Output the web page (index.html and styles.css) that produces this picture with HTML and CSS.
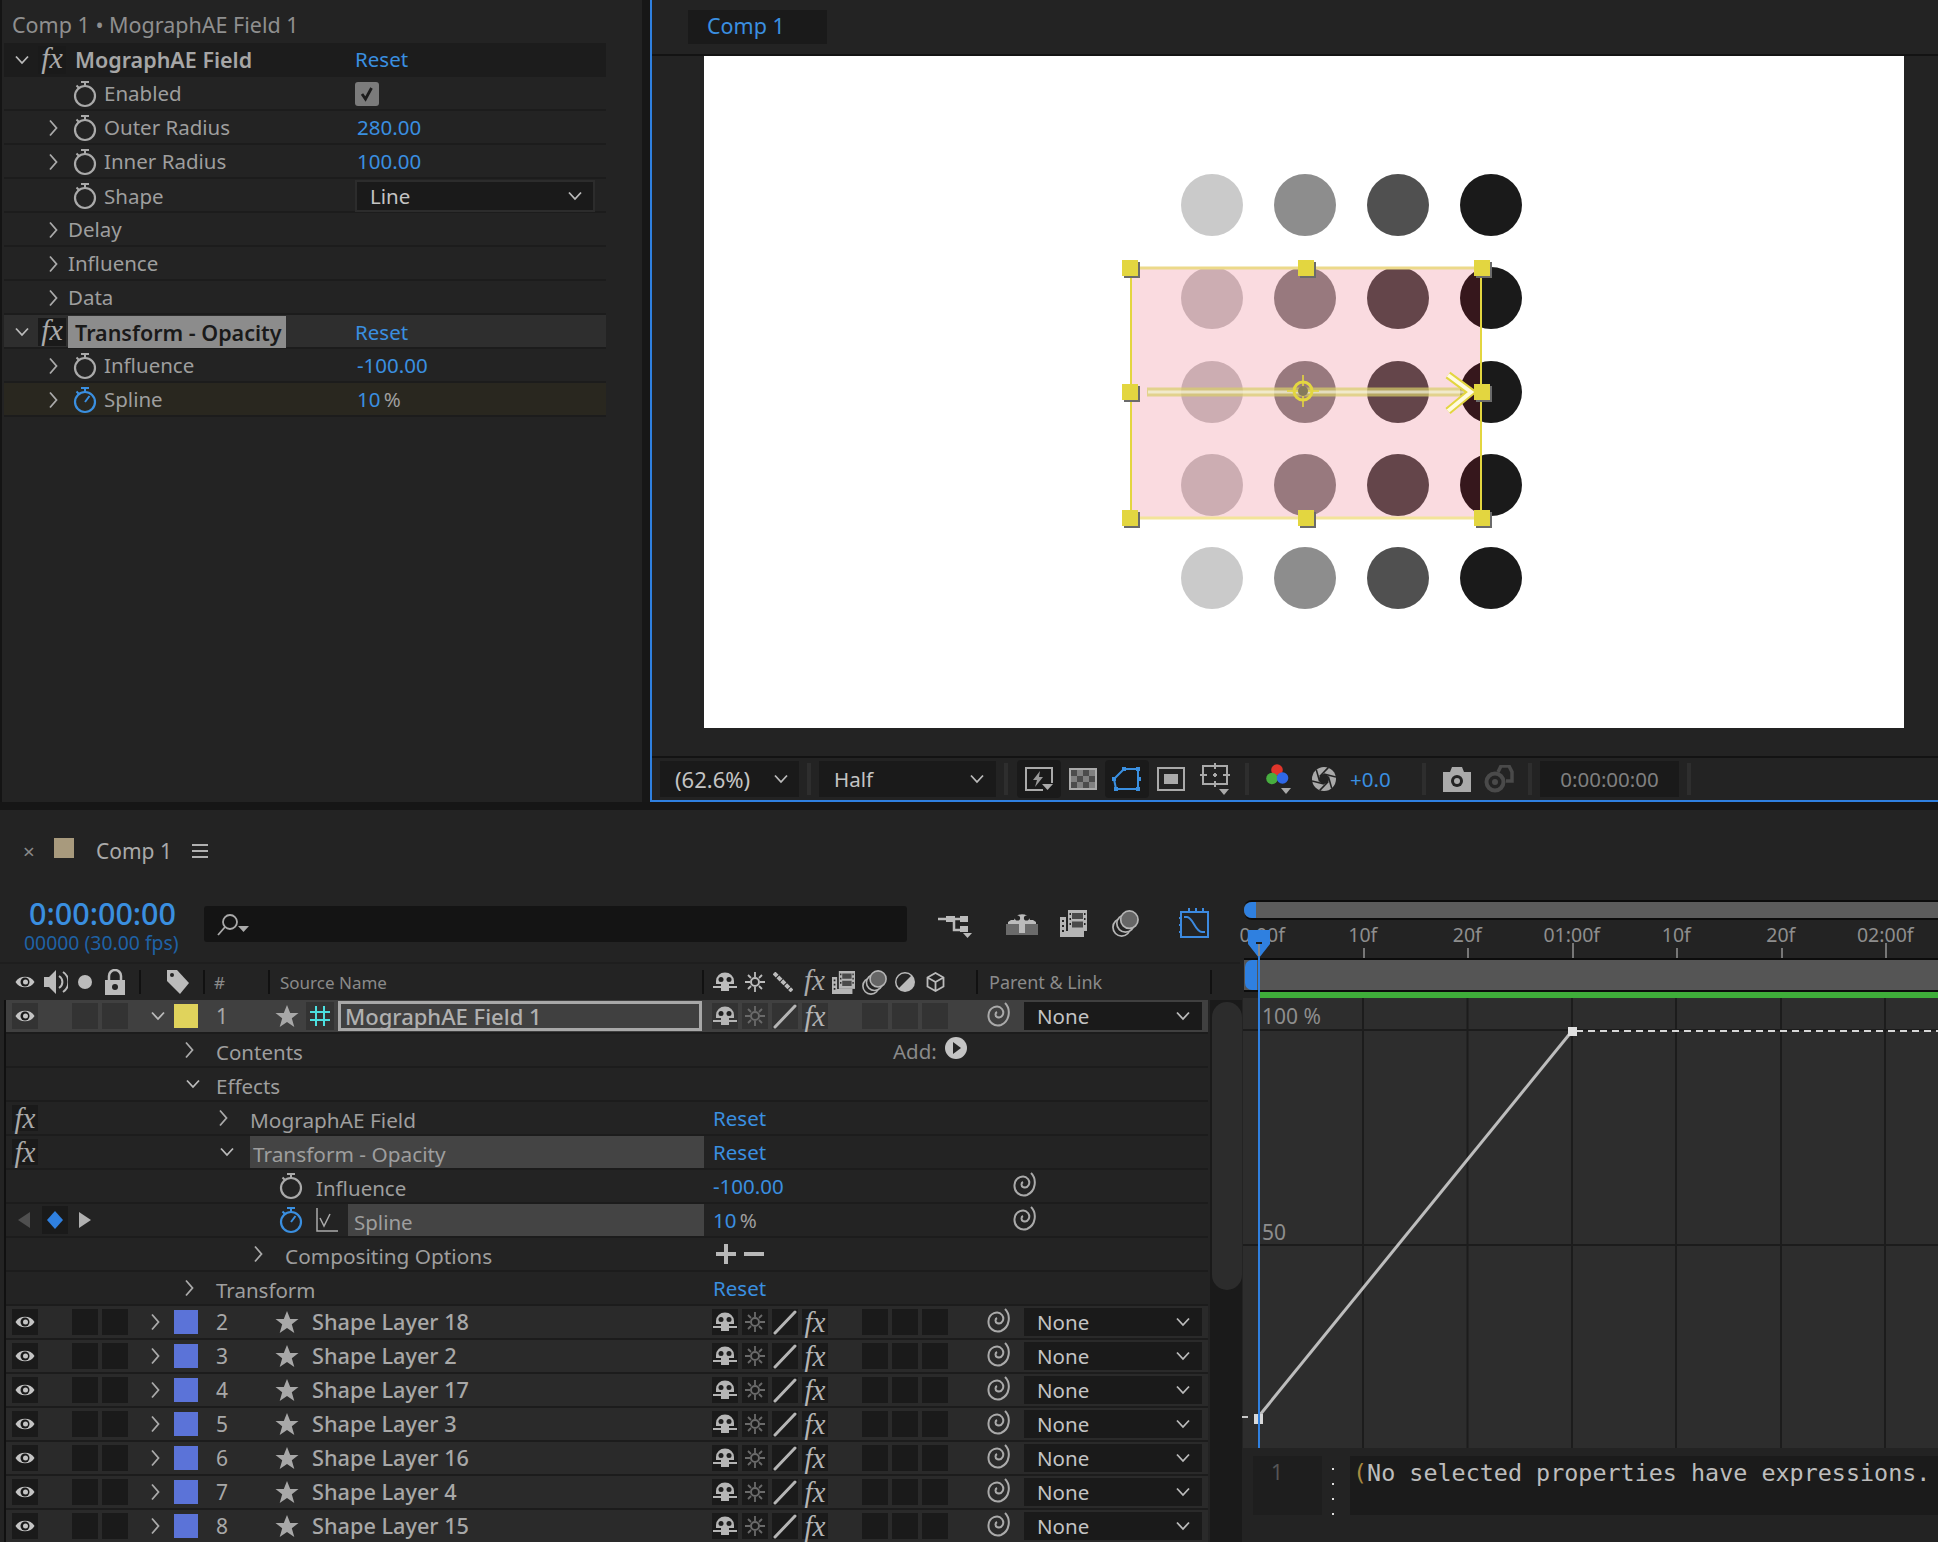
FILE: index.html
```html
<!DOCTYPE html>
<html lang="en">
<head>
  <meta charset="UTF-8" />
  <title>Comp 1</title>
  <link rel="stylesheet" href="styles.css">
</head>
<body>
  <!-- shared icons -->
  <svg class="defs" width="0" height="0">
    <symbol id="chev-r" viewBox="0 0 10 18"><path d="M2 1.500l6.500 7.500-6.500 7.500" fill="none" stroke="currentColor" stroke-width="1.800"/></symbol>
    <symbol id="chev-d" viewBox="0 0 14 10"><path d="M1 1.500l6 6.500 6-6.500" fill="none" stroke="currentColor" stroke-width="1.800"/></symbol>
    <symbol id="watch" viewBox="0 0 24 28"><circle cx="12" cy="16" r="10" fill="none" stroke="currentColor" stroke-width="2.200"/><path d="M8 2h8M12 2v4M3.500 5.500l3 3" fill="none" stroke="currentColor" stroke-width="2"/></symbol>
    <symbol id="watch-on" viewBox="0 0 24 28"><circle cx="12" cy="16" r="10" fill="none" stroke="currentColor" stroke-width="2.200"/><path d="M8 2h8M12 2v4M3.500 5.500l3 3M12 16l4.500-6" fill="none" stroke="currentColor" stroke-width="2"/></symbol>
    <symbol id="eye" viewBox="0 0 20 16"><path d="M0.500 8C4 1 16 1 19.500 8 16 15 4 15 0.500 8z" fill="#c4c4c4"/><circle cx="10" cy="8" r="4.500" fill="#1a1a1a"/><circle cx="10.500" cy="8" r="2.500" fill="#c4c4c4"/></symbol>
    <symbol id="star" viewBox="0 0 24 24"><path d="M12 1l3.200 8h8.300l-6.700 5.300 2.500 8.700-7.300-5-7.300 5 2.500-8.700L0.500 9h8.300z" fill="currentColor"/></symbol>
    <symbol id="shy" viewBox="0 0 24 20"><path d="M3 9a9 8.500 0 0 1 18 0v3h-5v7H8v-7H3z" fill="currentColor"/><circle cx="8" cy="7.500" r="2.500" fill="#1e1e1e"/><circle cx="16" cy="7.500" r="2.500" fill="#1e1e1e"/><path d="M0 15h8M16 15h8" stroke="currentColor" stroke-width="2"/></symbol>
    <symbol id="sun" viewBox="0 0 20 20"><circle cx="10" cy="10" r="4" fill="none" stroke="currentColor" stroke-width="2"/><path d="M10 0v5M10 15v5M0 10h5M15 10h5M3 3l3 3M14 14l3 3M3 17l3-3M14 6l3-3" stroke="currentColor" stroke-width="1.800"/></symbol>
    <symbol id="diag" viewBox="0 0 26 26"><path d="M3 24L23 3" stroke="currentColor" stroke-width="3" stroke-linecap="round"/></symbol>
    <symbol id="diag-dots" viewBox="0 0 20 20"><path d="M1 1L19 19" stroke="currentColor" stroke-width="4" stroke-dasharray="4.500 1"/></symbol>
    <symbol id="spiral" viewBox="0 0 24 26"><path d="M18 2C24 8 23 20 14 24 7 26 1 21 1.500 14 2 6 11 3 15 8 18 12 15 18 10 16 8 15 8 12 10 11" fill="none" stroke="currentColor" stroke-width="2"/></symbol>
    <symbol id="film" viewBox="0 0 27 27"><path d="M0 7h6v14h18v6H0z" fill="currentColor"/><path d="M2 10h2v2H2zM2 15h2v2H2zM2 20h2v2H2z" fill="#232323"/><path d="M8 0h19v21H8z" fill="currentColor"/><path d="M12 3h11v6H12zM12 11.500h11v6H12z" fill="#4a4a4a"/><path d="M9.500 3h1.500v2H9.500zM9.500 8h1.500v2H9.500zM9.500 13h1.500v2H9.500zM24 3h1.500v2H24zM24 8h1.500v2H24zM24 13h1.500v2H24z" fill="#232323"/></symbol>
    <symbol id="blur" viewBox="0 0 28 28"><circle cx="10" cy="18" r="9" fill="#232323" stroke="currentColor" stroke-width="1.800"/><circle cx="14" cy="14" r="9" fill="#232323" stroke="currentColor" stroke-width="1.800"/><circle cx="18" cy="10" r="9" fill="#666" stroke="currentColor" stroke-width="1.800"/></symbol>
  </svg>

  <div class="top">
    <section class="effects">
      <div class="fx-title">Comp 1 • MographAE Field 1</div>
      <div class="fx-row fx-head"><svg class="chev-d ic-mid"><use href="#chev-d"/></svg><span class="fx-badge">fx</span><span class="fx-name strong">MographAE Field</span><span class="blue">Reset</span></div>
      <div class="fx-row"><span></span><span></span><span class="fx-name"><svg class="watch"><use href="#watch"/></svg>Enabled</span><span class="checkbox"><svg width="16" height="16" viewBox="0 0 16 16"><path d="M3 8l3.500 5 6-11" fill="none" stroke="#1c1c1c" stroke-width="2.800"/></svg></span></div>
      <div class="fx-row"><span></span><svg class="chev-r"><use href="#chev-r"/></svg><span class="fx-name"><svg class="watch"><use href="#watch"/></svg>Outer Radius</span><span class="blue num">280.00</span></div>
      <div class="fx-row"><span></span><svg class="chev-r"><use href="#chev-r"/></svg><span class="fx-name"><svg class="watch"><use href="#watch"/></svg>Inner Radius</span><span class="blue num">100.00</span></div>
      <div class="fx-row"><span></span><span></span><span class="fx-name"><svg class="watch"><use href="#watch"/></svg>Shape</span><span class="select select-fx">Line<svg class="chev-d"><use href="#chev-d"/></svg></span></div>
      <div class="fx-row"><span></span><svg class="chev-r"><use href="#chev-r"/></svg><span class="fx-name plain">Delay</span></div>
      <div class="fx-row"><span></span><svg class="chev-r"><use href="#chev-r"/></svg><span class="fx-name plain">Influence</span></div>
      <div class="fx-row"><span></span><svg class="chev-r"><use href="#chev-r"/></svg><span class="fx-name plain">Data</span></div>
      <div class="fx-row fx-head-sel"><svg class="chev-d ic-mid"><use href="#chev-d"/></svg><span class="fx-badge">fx</span><span class="fx-name"><span class="fx-sel">Transform - Opacity</span></span><span class="blue">Reset</span></div>
      <div class="fx-row"><span></span><svg class="chev-r"><use href="#chev-r"/></svg><span class="fx-name"><svg class="watch"><use href="#watch"/></svg>Influence</span><span class="blue num">-100.00</span></div>
      <div class="fx-row fx-key"><span></span><svg class="chev-r"><use href="#chev-r"/></svg><span class="fx-name"><svg class="watch blue"><use href="#watch-on"/></svg>Spline</span><span class="blue num">10 <i class="pct">%</i></span></div>
    </section>

    <section class="viewer">
      <div class="view-tabs"><span class="view-tab">Comp 1</span></div>
      <div class="stage">
        <svg class="comp" width="1200" height="672" viewBox="704 56 1200 672">
          <rect x="704" y="56" width="1200" height="672" fill="#fff"/>
          <g fill="#cacaca"><circle cx="1212" cy="205" r="31"/><circle cx="1212" cy="298" r="31"/><circle cx="1212" cy="392" r="31"/><circle cx="1212" cy="485" r="31"/><circle cx="1212" cy="578" r="31"/></g>
          <g fill="#8d8d8d"><circle cx="1305" cy="205" r="31"/><circle cx="1305" cy="298" r="31"/><circle cx="1305" cy="392" r="31"/><circle cx="1305" cy="485" r="31"/><circle cx="1305" cy="578" r="31"/></g>
          <g fill="#505050"><circle cx="1398" cy="205" r="31"/><circle cx="1398" cy="298" r="31"/><circle cx="1398" cy="392" r="31"/><circle cx="1398" cy="485" r="31"/><circle cx="1398" cy="578" r="31"/></g>
          <g fill="#1a1a1a"><circle cx="1491" cy="205" r="31"/><circle cx="1491" cy="298" r="31"/><circle cx="1491" cy="392" r="31"/><circle cx="1491" cy="485" r="31"/><circle cx="1491" cy="578" r="31"/></g>
          <rect x="1131" y="268" width="350" height="250" fill="rgb(222,5,40)" fill-opacity=".144"/>
          <path d="M1131 268V518M1481 268V518" stroke="#e3d640" stroke-width="2"/>
          <path d="M1131 268H1481" stroke="#ecd98a" stroke-width="3"/>
          <path d="M1131 518H1481" stroke="#f3e49a" stroke-width="3"/>
          <path d="M1147 392H1468" stroke="#d8cf6a" stroke-width="9" opacity=".7"/>
          <path d="M1148 392H1470" stroke="#fff" stroke-width="3" opacity=".55"/>
          <path d="M1448 375L1471 392 1448 411" fill="none" stroke="#e3d640" stroke-width="8"/>
          <path d="M1448 375L1471 392 1448 411" fill="none" stroke="#fffbe0" stroke-width="4"/>
          <circle cx="1303" cy="391" r="9" fill="none" stroke="#e3d640" stroke-width="3"/>
          <path d="M1303 375v32M1287 391h32" stroke="#e3d640" stroke-width="2" opacity=".8"/>
          <circle cx="1303" cy="391" r="5" fill="#857a5c"/>
          <g fill="#6b6b6b"><rect x="1124" y="262" width="16" height="16"/><rect x="1300" y="262" width="16" height="16"/><rect x="1476" y="262" width="16" height="16"/><rect x="1124" y="386" width="16" height="16"/><rect x="1476" y="386" width="16" height="16"/><rect x="1124" y="512" width="16" height="16"/><rect x="1300" y="512" width="16" height="16"/><rect x="1476" y="512" width="16" height="16"/></g>
          <g fill="#e3d640"><rect x="1122" y="260" width="16" height="16"/><rect x="1298" y="260" width="16" height="16"/><rect x="1474" y="260" width="16" height="16"/><rect x="1122" y="384" width="16" height="16"/><rect x="1474" y="384" width="16" height="16"/><rect x="1122" y="510" width="16" height="16"/><rect x="1298" y="510" width="16" height="16"/><rect x="1474" y="510" width="16" height="16"/></g>
        </svg>
      </div>
      <div class="view-bar">
        <span class="select select-zoom">(62.6%)<svg class="chev-d"><use href="#chev-d"/></svg></span>
        <span class="tb-sep"></span>
        <span class="select select-half">Half<svg class="chev-d"><use href="#chev-d"/></svg></span>
        <span class="tb-sep"></span>
        <span class="tb-btn tb-dark first"><svg width="28" height="24" viewBox="0 0 28 24"><path d="M18 23H1V1h26v15" fill="none" stroke="#aaa" stroke-width="2"/><path d="M15 4L8 13h4l-2 7 8-10h-4z" fill="#999"/><path d="M17 17h11l-5.500 6z" fill="#aaa"/></svg></span>
        <span class="tb-btn"><svg width="28" height="22" viewBox="0 0 28 22"><rect width="28" height="22" fill="#aaa"/><rect x="2" y="2" width="24" height="18" fill="#4c4c4c"/><path d="M8 2h6v6H8zM20 2h6v6h-6zM2 8h6v6H2zM14 8h6v6h-6zM8 14h6v6H8zM20 14h6v6h-6z" fill="#808080"/></svg></span>
        <span class="tb-btn tb-dark blue"><svg width="30" height="26" viewBox="0 0 30 26"><path d="M2 13L12 3H26V23H4z" fill="none" stroke="currentColor" stroke-width="2"/><path d="M10 1h4v4h-4zM24 1h4v4h-4zM25 11h4v4h-4zM24 21h4v4h-4zM2 21h4v4H2zM0 11h4v4H0z" fill="currentColor"/></svg></span>
        <span class="tb-btn"><svg width="28" height="24" viewBox="0 0 28 24"><rect x="1" y="1" width="26" height="22" fill="none" stroke="#aaa" stroke-width="2"/><rect x="7" y="7" width="14" height="10" fill="#aaa"/></svg></span>
        <span class="tb-btn"><svg width="30" height="32" viewBox="0 0 30 32"><rect x="3" y="3" width="24" height="18" fill="none" stroke="#aaa" stroke-width="2"/><path d="M15 0v6M15 18v6M0 12h7M23 12h7M13 12h4M15 10v4" stroke="#aaa" stroke-width="2"/><path d="M19 26h10l-5 6z" fill="#aaa"/></svg></span>
        <span class="tb-sep"></span>
        <span class="tb-btn colors"><svg width="26" height="30" viewBox="0 0 26 30"><circle cx="12" cy="6" r="5.800" fill="#e0352b"/><circle cx="7" cy="14.500" r="5.800" fill="#47ad3f"/><circle cx="17.500" cy="14" r="5.800" fill="#2f68e8"/><path d="M16 24h10l-5 6z" fill="#aaa"/></svg></span>
        <span class="tb-btn aperture"><svg width="24" height="24" viewBox="0 0 24 24"><circle cx="12" cy="12" r="12" fill="#aaa"/><g stroke="#232323" stroke-width="1.600"><path d="M12 7L24 10"/><path d="M12 7L24 10" transform="rotate(60 12 12)"/><path d="M12 7L24 10" transform="rotate(120 12 12)"/><path d="M12 7L24 10" transform="rotate(180 12 12)"/><path d="M12 7L24 10" transform="rotate(240 12 12)"/><path d="M12 7L24 10" transform="rotate(300 12 12)"/></g><circle cx="12" cy="12" r="5" fill="#232323"/></svg></span>
        <span class="blue exposure">+0.0</span>
        <span class="tb-sep sep-wide"></span>
        <span class="tb-btn small"><svg width="28" height="26" viewBox="0 0 28 26"><path d="M0 6h7l2-5h10l2 5h7v20H0z" fill="#aaa"/><circle cx="14" cy="15" r="6" fill="#232323"/><circle cx="14" cy="15" r="3" fill="#aaa"/></svg></span>
        <span class="tb-btn small"><svg width="30" height="28" viewBox="0 0 30 28"><circle cx="11" cy="17" r="8.500" fill="none" stroke="#4a4a4a" stroke-width="4"/><circle cx="11" cy="17" r="3" fill="#4a4a4a"/><path d="M14 7l3-6h8l3 6v9h-6" fill="none" stroke="#4a4a4a" stroke-width="3.500"/></svg></span>
        <span class="tb-sep"></span>
        <span class="time-box">0:00:00:00</span>
        <span class="tb-sep"></span>
      </div>
    </section>
  </div>

  <section class="timeline">
    <div class="tl-tab">
      <span class="tl-close">×</span>
      <span class="tl-swatch"></span>
      <span class="tl-name">Comp 1</span>
      <svg class="tl-menu" width="16" height="14" viewBox="0 0 16 14"><path d="M0 1h16M0 7h16M0 13h16" stroke="#b0b0b0" stroke-width="2"/></svg>
    </div>
    <div class="tl-body">
      <div class="tl-left">
        <div class="tl-ctrl">
          <div class="tc">
            <div class="tc-main">0:00:00:00</div>
            <div class="tc-sub">00000 (30.00 fps)</div>
          </div>
          <div class="search"><svg width="34" height="24" viewBox="0 0 34 24"><circle cx="14" cy="9" r="7" fill="none" stroke="#aaa" stroke-width="1.800"/><path d="M9 14l-7 8" stroke="#aaa" stroke-width="1.800"/><path d="M22 13h11l-5.500 6z" fill="#aaa"/></svg></div>
          <div class="ctrl-icons">
            <svg class="ci-flow" width="34" height="24" viewBox="0 0 34 24"><path d="M0 5h30M16 5v11h8" fill="none" stroke="#bbb" stroke-width="2.500"/><path d="M8 2h9v6H8zM22 2h8v6h-8zM22 12h8v6h-8z" fill="#bbb"/><path d="M25 19h9l-4.500 5z" fill="#bbb"/></svg>
            <svg class="ci-shy" width="32" height="24" viewBox="0 0 32 24"><path d="M0 13h32v11H0z" fill="#6a6a6a"/><path d="M2 13v-2l3-2h3a8.500 8.500 0 0 1 16 0h3l3 2v2z" fill="#bbb"/><path d="M13 12h6v10h-6z" fill="#bbb"/><circle cx="11.500" cy="7" r="2.600" fill="#232323"/><circle cx="20.500" cy="7" r="2.600" fill="#232323"/></svg>
            <svg class="ci-film" width="27" height="27"><use href="#film"/></svg>
            <svg class="ci-blur" width="27" height="27"><use href="#blur"/></svg>
            <svg class="ci-graph" width="30" height="30" viewBox="0 0 30 30"><rect x="2" y="4" width="27" height="25" fill="none" stroke="#3c8ae0" stroke-width="2"/><path d="M5 9h3c6 0 8 15 15 15h3" fill="none" stroke="#3c8ae0" stroke-width="2"/><path d="M10 0v4M17 0v4M24 0v4M0 10h2M0 17h2M0 24h2" stroke="#3c8ae0" stroke-width="2"/></svg>
          </div>
        </div>
        <div class="tl-head">
          <svg class="eye" width="20" height="16"><use href="#eye"/></svg>
          <svg class="h-audio" width="24" height="26" viewBox="0 0 24 26"><path d="M0 8h5l7-7v24l-7-7H0z" fill="#bbb"/><path d="M15 7a7 7 0 0 1 0 12M19 3a12 12 0 0 1 0 20" fill="none" stroke="#bbb" stroke-width="2"/></svg>
          <span class="h-solo"></span>
          <svg class="h-lock" width="20" height="26" viewBox="0 0 20 26"><path d="M4 12V7a6 6 0 0 1 12 0v5" fill="none" stroke="#bbb" stroke-width="2.500"/><path d="M0 11h20v15H0z" fill="#bbb"/><circle cx="10" cy="18" r="3" fill="#232323"/></svg>
          <span class="h-sep s1"></span>
          <svg class="h-tag" width="24" height="26" viewBox="0 0 24 26"><path d="M1 1h10l12 13-9 11L1 12z" fill="#bbb"/><circle cx="6" cy="6" r="2" fill="#232323"/></svg>
          <span class="h-sep s2"></span>
          <span class="h-hash">#</span>
          <span class="h-sep s3"></span>
          <span class="h-src">Source Name</span>
          <span class="h-sep"></span>
          <svg class="sw-shy" width="24" height="20"><use href="#shy"/></svg>
          <svg class="sw-sun" width="20" height="20"><use href="#sun"/></svg>
          <svg class="sw-dots" width="20" height="20"><use href="#diag-dots"/></svg>
          <span class="fx-glyph sw-fx">fx</span>
          <svg class="sw-film" width="23" height="23"><use href="#film"/></svg>
          <svg class="sw-blur" width="25" height="25"><use href="#blur"/></svg>
          <svg class="sw-adj" width="20" height="20" viewBox="0 0 20 20"><circle cx="10" cy="10" r="10" fill="#bbb"/><path d="M4 16A8.200 8.200 0 0 1 16 4z" fill="#232323"/></svg>
          <svg class="sw-cube" width="19" height="20" viewBox="0 0 18 20"><path d="M9 1l8 4.500v9L9 19l-8-4.500v-9zM1 5.500l8 4.500 8-4.500M9 10v9" fill="none" stroke="#bbb" stroke-width="1.800"/></svg>
          <span class="h-sep s5"></span>
          <span class="h-parent">Parent &amp; Link</span>
          <span class="h-sep"></span>
        </div>
        <div class="tl-rows-wrap">
          <div class="tl-rows">
            <div class="row layer layer-sel">
              <div class="left">
                <span class="cell c-eye"><svg width="20" height="16"><use href="#eye"/></svg></span><span class="cell c-solo"></span><span class="cell c-lock"></span>
                <span class="c-twirl"><svg class="chev-d"><use href="#chev-d"/></svg></span><span class="c-label yellow"></span><span class="c-num">1</span><svg class="c-star"><use href="#star"/></svg>
                <span class="c-hash"><svg width="24" height="24" viewBox="0 0 24 24"><path d="M8 2v20M16 2v20M2 8h20M2 16h20" stroke="#4ce0e0" stroke-width="2"/></svg></span>
                <span class="c-input">MographAE Field 1</span>
              </div>
              <div class="switches"><span class="sw"><svg width="24" height="20"><use href="#shy"/></svg></span><span class="sw dim"><svg width="20" height="20"><use href="#sun"/></svg></span><span class="sw"><svg width="26" height="26"><use href="#diag"/></svg></span><span class="sw fx-glyph">fx</span><span class="sw gap"></span><span class="sw"></span><span class="sw"></span></div>
              <span class="pick"><svg width="24" height="26"><use href="#spiral"/></svg></span>
              <span class="select select-parent">None<svg class="chev-d"><use href="#chev-d"/></svg></span>
            </div>
            <div class="row"><div class="left"><span class="gutter"></span><span class="tree lv1"><svg class="chev-r"><use href="#chev-r"/></svg>Contents</span></div><div class="add"><span class="add-txt">Add:</span><svg width="22" height="22" viewBox="0 0 22 22"><circle cx="11" cy="11" r="11" fill="#c4c4c4"/><path d="M8 5l8 6-8 6z" fill="#232323"/></svg></div></div>
            <div class="row"><div class="left"><span class="gutter"></span><span class="tree lv1"><svg class="chev-d"><use href="#chev-d"/></svg>Effects</span></div></div>
            <div class="row"><div class="left"><span class="gutter"><span class="cell c-eye fx-glyph">fx</span></span><span class="tree lv2"><svg class="chev-r"><use href="#chev-r"/></svg>MographAE Field</span></div><span class="blue val">Reset</span></div>
            <div class="row"><div class="left"><span class="gutter"><span class="cell c-eye fx-glyph">fx</span></span><span class="tree lv2"><svg class="chev-d"><use href="#chev-d"/></svg><span class="name-sel">Transform - Opacity</span></span></div><span class="blue val">Reset</span></div>
            <div class="row"><div class="left"><span class="gutter"></span><span class="tree lv4"><svg class="watch"><use href="#watch"/></svg>Influence</span></div><span class="blue val">-100.00</span><span class="pick-prop"><svg width="24" height="26"><use href="#spiral"/></svg></span></div>
            <div class="row"><div class="left"><span class="gutter"><span class="kf-nav"><svg width="12" height="16" viewBox="0 0 12 16"><path d="M12 0v16L0 8z" fill="#4f4f4f"/></svg><span class="kf-box"><svg width="16" height="18" viewBox="0 0 16 18"><path d="M8 0l8 9-8 9-8-9z" fill="#2f80e0"/></svg></span><svg width="12" height="16" viewBox="0 0 12 16"><path d="M0 0v16l12-8z" fill="#b0b0b0"/></svg></span></span><span class="tree lv4"><svg class="watch blue"><use href="#watch-on"/></svg><svg class="graph-ic" width="22" height="24" viewBox="0 0 22 24"><path d="M1 0v23h21M4 10l4 8 6-12" fill="none" stroke="#aaa" stroke-width="1.500"/></svg><span class="name-sel spline">Spline</span></span></div><span class="blue val">10 <i class="pct">%</i></span><span class="pick-prop"><svg width="24" height="26"><use href="#spiral"/></svg></span></div>
            <div class="row"><div class="left"><span class="gutter"></span><span class="tree lv3"><svg class="chev-r"><use href="#chev-r"/></svg>Compositing Options</span></div><span class="plus-minus"><svg width="48" height="20" viewBox="0 0 48 20"><path d="M0 10h20M10 0v20M28 10h20" stroke="#b8b8b8" stroke-width="4"/></svg></span></div>
            <div class="row"><div class="left"><span class="gutter"></span><span class="tree lv1"><svg class="chev-r"><use href="#chev-r"/></svg>Transform</span></div><span class="blue val">Reset</span></div>

            <div class="row layer">
              <div class="left"><span class="cell c-eye"><svg width="20" height="16"><use href="#eye"/></svg></span><span class="cell c-solo"></span><span class="cell c-lock"></span><span class="c-twirl"><svg class="chev-r"><use href="#chev-r"/></svg></span><span class="c-label"></span><span class="c-num">2</span><svg class="c-star"><use href="#star"/></svg><span class="c-layer">Shape Layer 18</span></div>
              <div class="switches"><span class="sw"><svg width="24" height="20"><use href="#shy"/></svg></span><span class="sw dim"><svg width="20" height="20"><use href="#sun"/></svg></span><span class="sw"><svg width="26" height="26"><use href="#diag"/></svg></span><span class="sw fx-glyph">fx</span><span class="sw gap"></span><span class="sw"></span><span class="sw"></span></div>
              <span class="pick"><svg width="24" height="26"><use href="#spiral"/></svg></span><span class="select select-parent">None<svg class="chev-d"><use href="#chev-d"/></svg></span>
            </div>
            <div class="row layer">
              <div class="left"><span class="cell c-eye"><svg width="20" height="16"><use href="#eye"/></svg></span><span class="cell c-solo"></span><span class="cell c-lock"></span><span class="c-twirl"><svg class="chev-r"><use href="#chev-r"/></svg></span><span class="c-label"></span><span class="c-num">3</span><svg class="c-star"><use href="#star"/></svg><span class="c-layer">Shape Layer 2</span></div>
              <div class="switches"><span class="sw"><svg width="24" height="20"><use href="#shy"/></svg></span><span class="sw dim"><svg width="20" height="20"><use href="#sun"/></svg></span><span class="sw"><svg width="26" height="26"><use href="#diag"/></svg></span><span class="sw fx-glyph">fx</span><span class="sw gap"></span><span class="sw"></span><span class="sw"></span></div>
              <span class="pick"><svg width="24" height="26"><use href="#spiral"/></svg></span><span class="select select-parent">None<svg class="chev-d"><use href="#chev-d"/></svg></span>
            </div>
            <div class="row layer">
              <div class="left"><span class="cell c-eye"><svg width="20" height="16"><use href="#eye"/></svg></span><span class="cell c-solo"></span><span class="cell c-lock"></span><span class="c-twirl"><svg class="chev-r"><use href="#chev-r"/></svg></span><span class="c-label"></span><span class="c-num">4</span><svg class="c-star"><use href="#star"/></svg><span class="c-layer">Shape Layer 17</span></div>
              <div class="switches"><span class="sw"><svg width="24" height="20"><use href="#shy"/></svg></span><span class="sw dim"><svg width="20" height="20"><use href="#sun"/></svg></span><span class="sw"><svg width="26" height="26"><use href="#diag"/></svg></span><span class="sw fx-glyph">fx</span><span class="sw gap"></span><span class="sw"></span><span class="sw"></span></div>
              <span class="pick"><svg width="24" height="26"><use href="#spiral"/></svg></span><span class="select select-parent">None<svg class="chev-d"><use href="#chev-d"/></svg></span>
            </div>
            <div class="row layer">
              <div class="left"><span class="cell c-eye"><svg width="20" height="16"><use href="#eye"/></svg></span><span class="cell c-solo"></span><span class="cell c-lock"></span><span class="c-twirl"><svg class="chev-r"><use href="#chev-r"/></svg></span><span class="c-label"></span><span class="c-num">5</span><svg class="c-star"><use href="#star"/></svg><span class="c-layer">Shape Layer 3</span></div>
              <div class="switches"><span class="sw"><svg width="24" height="20"><use href="#shy"/></svg></span><span class="sw dim"><svg width="20" height="20"><use href="#sun"/></svg></span><span class="sw"><svg width="26" height="26"><use href="#diag"/></svg></span><span class="sw fx-glyph">fx</span><span class="sw gap"></span><span class="sw"></span><span class="sw"></span></div>
              <span class="pick"><svg width="24" height="26"><use href="#spiral"/></svg></span><span class="select select-parent">None<svg class="chev-d"><use href="#chev-d"/></svg></span>
            </div>
            <div class="row layer">
              <div class="left"><span class="cell c-eye"><svg width="20" height="16"><use href="#eye"/></svg></span><span class="cell c-solo"></span><span class="cell c-lock"></span><span class="c-twirl"><svg class="chev-r"><use href="#chev-r"/></svg></span><span class="c-label"></span><span class="c-num">6</span><svg class="c-star"><use href="#star"/></svg><span class="c-layer">Shape Layer 16</span></div>
              <div class="switches"><span class="sw"><svg width="24" height="20"><use href="#shy"/></svg></span><span class="sw dim"><svg width="20" height="20"><use href="#sun"/></svg></span><span class="sw"><svg width="26" height="26"><use href="#diag"/></svg></span><span class="sw fx-glyph">fx</span><span class="sw gap"></span><span class="sw"></span><span class="sw"></span></div>
              <span class="pick"><svg width="24" height="26"><use href="#spiral"/></svg></span><span class="select select-parent">None<svg class="chev-d"><use href="#chev-d"/></svg></span>
            </div>
            <div class="row layer">
              <div class="left"><span class="cell c-eye"><svg width="20" height="16"><use href="#eye"/></svg></span><span class="cell c-solo"></span><span class="cell c-lock"></span><span class="c-twirl"><svg class="chev-r"><use href="#chev-r"/></svg></span><span class="c-label"></span><span class="c-num">7</span><svg class="c-star"><use href="#star"/></svg><span class="c-layer">Shape Layer 4</span></div>
              <div class="switches"><span class="sw"><svg width="24" height="20"><use href="#shy"/></svg></span><span class="sw dim"><svg width="20" height="20"><use href="#sun"/></svg></span><span class="sw"><svg width="26" height="26"><use href="#diag"/></svg></span><span class="sw fx-glyph">fx</span><span class="sw gap"></span><span class="sw"></span><span class="sw"></span></div>
              <span class="pick"><svg width="24" height="26"><use href="#spiral"/></svg></span><span class="select select-parent">None<svg class="chev-d"><use href="#chev-d"/></svg></span>
            </div>
            <div class="row layer">
              <div class="left"><span class="cell c-eye"><svg width="20" height="16"><use href="#eye"/></svg></span><span class="cell c-solo"></span><span class="cell c-lock"></span><span class="c-twirl"><svg class="chev-r"><use href="#chev-r"/></svg></span><span class="c-label"></span><span class="c-num">8</span><svg class="c-star"><use href="#star"/></svg><span class="c-layer">Shape Layer 15</span></div>
              <div class="switches"><span class="sw"><svg width="24" height="20"><use href="#shy"/></svg></span><span class="sw dim"><svg width="20" height="20"><use href="#sun"/></svg></span><span class="sw"><svg width="26" height="26"><use href="#diag"/></svg></span><span class="sw fx-glyph">fx</span><span class="sw gap"></span><span class="sw"></span><span class="sw"></span></div>
              <span class="pick"><svg width="24" height="26"><use href="#spiral"/></svg></span><span class="select select-parent">None<svg class="chev-d"><use href="#chev-d"/></svg></span>
            </div>
          </div>
          <div class="scroll"><div class="scroll-thumb"></div></div>
        </div>
      </div>

      <div class="tl-right">
        <div class="nav-bar"><span class="nav-handle"></span></div>
        <div class="ruler">
          <span class="tick">0:00f</span><span class="tick">10f</span><span class="tick">20f</span><span class="tick major">01:00f</span><span class="tick">10f</span><span class="tick">20f</span><span class="tick major">02:00f</span>
        </div>
        <div class="work"><span class="work-handle"></span></div>
        <div class="green"></div>
        <svg class="graph" width="698" height="450" viewBox="1240 998 698 450">
          <rect x="1243" y="998" width="695" height="450" fill="#2d2d2d"/>
          <path d="M1363 998V1448M1467.500 998V1448M1572 998V1448M1676 998V1448M1781 998V1448M1885 998V1448M1243 1030H1938M1243 1245H1938" stroke="#1c1c1c" stroke-width="2"/>
          <path d="M1259 1416L1572 1031" stroke="#bdbdbd" stroke-width="3"/>
          <path d="M1576 1031H1938" stroke="#d8d8d8" stroke-width="2" stroke-dasharray="7 5"/>
          <path d="M1242 1417h6" stroke="#c8c8c8" stroke-width="2"/>
          <rect x="1568" y="1027" width="9" height="9" fill="#e0e0e0"/>
          <rect x="1254" y="1414" width="9" height="10" fill="#d8d8d8"/>
          <text class="graph-txt" x="1262" y="1024">100 %</text>
          <text class="graph-txt" x="1262" y="1240">50</text>
        </svg>
        <div class="expr">
          <span class="expr-num">1</span>
          <span class="expr-dots"><i></i><i></i><i></i><i></i></span>
          <span class="expr-code"><b>(</b>No selected properties have expressions.</span>
        </div>
        <svg class="playhead" width="24" height="518" viewBox="0 0 24 518"><path d="M11 20h2v498h-2z" fill="#2f80e0"/><path d="M1 0h22v14L12 28 1 14z" fill="#2f80e0"/><path d="M9 13h6" stroke="#1c1c1c" stroke-width="2"/><path d="M12 14v12" stroke="#888" stroke-width="2"/></svg>
      </div>
    </div>
  </section>
</body>
</html>
```

FILE: styles.css
```css
:root {
  --bg: #232323;
  --dark: #1a1a1a;
  --line: #1c1c1c;
  --text: #9e9e9e;
  --bright: #c4c4c4;
  --blue: #3a8fe0;
}
* {
  box-sizing: border-box;
}
html, body {
  margin: 0;
  padding: 0;
}
body {
  width: 1938px;
  height: 1542px;
  overflow: hidden;
  background: var(--bg);
  color: var(--text);
  font-family: "Noto Sans", sans-serif;
  font-size: 20.500px;
  line-height: 1;
}
svg {
  display: block;
  flex: none;
}
.defs {
  position: absolute;
}
.blue {
  color: var(--blue);
}
.pct {
  font-style: normal;
  color: var(--text);
  margin-left: -2px;
}
.chev-r {
  width: 10px;
  height: 18px;
  color: #aaa;
}
.chev-d {
  width: 14px;
  height: 10px;
  color: #bbb;
}
.watch {
  width: 24px;
  height: 28px;
  color: #aaa;
}
.watch.blue {
  color: var(--blue);
}
.select {
  display: flex;
  align-items: center;
  justify-content: space-between;
  background: var(--dark);
  color: var(--bright);
}

/* top half */
.top {
  display: flex;
  height: 810px;
  background: #161616;
}
.effects {
  width: 650px;
  height: 802px;
  background: var(--bg);
  border-left: 2px solid #141414;
  border-right: 8px solid #171717;
}
.fx-title {
  height: 43px;
  padding: 14px 0 0 10px;
  color: #8f8f8f;
  font-size: 21.500px;
}
.fx-row {
  display: grid;
  grid-template-columns: 34px 30px 287px 1fr;
  align-items: center;
  justify-items: start;
  width: 602px;
  height: 34px;
  margin-left: 2px;
  padding-top: 1px;
  border-bottom: 2px solid var(--line);
}
.fx-row > .chev-r {
  justify-self: center;
}
.fx-row > .ic-mid {
  margin-left: 11px;
}
.fx-row .num {
  padding-left: 2px;
}
.fx-head {
  background: var(--line);
}
.fx-head-sel {
  background: #2e2e2e;
}
.fx-key {
  background: #29271f;
}
.fx-badge {
  width: 28px;
  height: 28px;
  background: var(--dark);
  font-family: "Liberation Serif", serif;
  font-style: italic;
  font-size: 30px;
  line-height: 24px;
  color: #aaa;
  text-align: center;
}
.fx-name {
  display: flex;
  align-items: center;
  gap: 7px;
  padding-left: 5px;
}
.fx-name.strong {
  padding-left: 7px;
  font-size: 21.500px;
  font-weight: 600;
  color: #a6a6a6;
}
.fx-name.plain {
  padding-left: 0;
}
.fx-name .fx-sel {
  display: block;
  width: 218px;
  height: 32px;
  margin-left: -5px;
  padding: 6px 0 0 7px;
  background: #8c8c8c;
  color: #1a1a1a;
  font-size: 21.500px;
  font-weight: 600;
  white-space: nowrap;
}
.checkbox {
  display: flex;
  align-items: center;
  justify-content: center;
  width: 24px;
  height: 24px;
  background: #7b7b7b;
  border-radius: 3px;
}
.select-fx {
  width: 240px;
  height: 32px;
  padding: 0 11px 0 13px;
  border: 2px solid #2c2c2c;
}

/* viewer */
.viewer {
  flex: 1;
  height: 802px;
  background: var(--bg);
  border-left: 2px solid #2f80e0;
  border-bottom: 2px solid #2f80e0;
}
.view-tabs {
  height: 56px;
  padding: 10px 0 0 36px;
  border-bottom: 2px solid #131313;
}
.view-tab {
  display: block;
  width: 139px;
  height: 34px;
  padding: 5px 0 0 19px;
  background: var(--dark);
  color: var(--blue);
  font-size: 21.500px;
}
.stage {
  height: 700px;
  padding-left: 52px;
}
.view-bar {
  display: flex;
  align-items: center;
  height: 44px;
  padding-left: 8px;
  border-top: 2px solid #131313;
}
.select-zoom {
  width: 139px;
  height: 36px;
  padding: 0 11px 0 15px;
  font-size: 22px;
}
.select-half {
  width: 177px;
  height: 36px;
  padding: 0 12px 0 15px;
}
.tb-sep {
  width: 4px;
  height: 32px;
  margin: 0 8px;
  background: #2e2e2e;
}
.tb-btn {
  display: flex;
  align-items: center;
  justify-content: center;
  width: 44px;
  height: 38px;
}
.tb-btn.first {
  margin-left: 1px;
}
.tb-btn.small {
  width: 42px;
}
.tb-dark {
  background: var(--dark);
  border-radius: 4px;
}
.tb-btn.colors {
  margin-left: 1px;
  width: 40px;
}
.tb-btn.aperture {
  margin-left: 6px;
  width: 40px;
}
.exposure {
  margin-left: 6px;
  width: 42px;
}
.sep-wide {
  margin: 0 10px 0 30px;
}
.time-box {
  display: flex;
  align-items: center;
  justify-content: center;
  width: 139px;
  height: 36px;
  background: var(--dark);
  color: #808080;
}

/* timeline */
.timeline {
  height: 732px;
}
.tl-tab {
  display: flex;
  align-items: center;
  height: 80px;
  padding-top: 2px;
}
.tl-close {
  margin-left: 23px;
  width: 31px;
  color: #8a8a8a;
}
.tl-swatch {
  width: 20px;
  height: 20px;
  margin-top: -6px;
  background: #a89a7d;
}
.tl-name {
  margin-left: 22px;
  width: 96px;
  color: #aaa;
  font-size: 21px;
}
.tl-body {
  display: flex;
  height: 652px;
}
.tl-left {
  width: 1240px;
  flex: none;
}
.tl-ctrl {
  display: flex;
  height: 72px;
}
.tc {
  width: 204px;
  padding: 8px 0 0 24px;
}
.tc-main {
  padding-left: 5px;
  font-size: 30.500px;
  font-weight: 500;
  color: var(--blue);
}
.tc-sub {
  margin-top: 4px;
  font-size: 19.400px;
  color: #1f62a6;
  white-space: nowrap;
}
.search {
  width: 703px;
  height: 36px;
  margin-top: 16px;
  padding: 7px 0 0 12px;
  background: #141414;
  border-radius: 3px;
}
.ctrl-icons {
  display: flex;
  align-items: center;
  height: 72px;
  padding-bottom: 6px;
  color: #b5b5b5;
}
.ci-flow {
  margin: 6px 0 0 31px;
}
.ci-shy {
  margin-left: 34px;
}
.ci-film {
  margin-left: 22px;
}
.ci-blur {
  margin-left: 25px;
}
.ci-graph {
  margin-left: 40px;
}
.tl-head {
  display: flex;
  align-items: center;
  height: 38px;
  border-top: 2px solid #1e1e1e;
  font-size: 17px;
  color: #8a8a8a;
}
.tl-head .eye {
  margin-left: 15px;
}
.h-audio {
  margin-left: 9px;
}
.h-solo {
  width: 14px;
  height: 14px;
  margin-left: 10px;
  border-radius: 50%;
  background: #bbb;
}
.h-lock {
  margin-left: 13px;
}
.h-sep {
  flex: none;
  width: 2px;
  height: 24px;
  background: #111;
}
.s1 {
  margin-left: 14px;
}
.h-tag {
  margin-left: 25px;
}
.s2 {
  margin-left: 13px;
}
.h-hash {
  margin-left: 9px;
  width: 10px;
}
.s3 {
  margin-left: 44px;
}
.h-src {
  margin-left: 10px;
  width: 422px;
}
.sw-shy {
  margin-left: 9px;
  color: #bbb;
}
.sw-sun {
  margin-left: 8px;
  color: #bbb;
}
.sw-dots {
  margin-left: 8px;
  color: #bbb;
}
.sw-fx {
  width: 21px;
  margin-left: 11px;
  margin-top: -4px;
}
.sw-film {
  margin-left: 7px;
  color: #b5b5b5;
}
.sw-blur {
  margin-left: 7px;
  color: #b5b5b5;
}
.sw-adj {
  margin-left: 8px;
}
.sw-cube {
  margin-left: 11px;
}
.s5 {
  margin-left: 31px;
}
.h-parent {
  margin-left: 11px;
  width: 221px;
  font-size: 18px;
}
.fx-glyph {
  font-family: "Liberation Serif", serif;
  font-style: italic;
  font-size: 29px;
  line-height: 22px;
  color: #aaa;
}

.tl-rows-wrap {
  display: flex;
  height: 542px;
}
.tl-rows {
  width: 1210px;
  border-left: 2px solid #101010;
  margin-left: 4px;
  flex: none;
}
.row {
  display: flex;
  align-items: center;
  width: 1202px;
  height: 34px;
  border-bottom: 2px solid var(--line);
}
.left {
  display: flex;
  align-items: center;
  width: 700px;
  flex: none;
  height: 100%;
}
.layer {
  background: #2a2a2a;
}
.layer-sel {
  background: #404040;
}
.cell {
  display: flex;
  align-items: center;
  justify-content: center;
  width: 26px;
  height: 26px;
  flex: none;
  background: var(--dark);
  text-align: center;
}
.layer-sel .cell,
.layer-sel .sw {
  background: #333;
}
.c-eye {
  margin-left: 6px;
}
.c-solo {
  margin-left: 34px;
}
.c-lock {
  margin-left: 4px;
}
.c-twirl {
  display: flex;
  justify-content: center;
  width: 46px;
  padding-left: 8px;
  flex: none;
}
.layer-sel .c-twirl {
  padding-left: 14px;
}
.c-label {
  width: 24px;
  height: 24px;
  flex: none;
  background: #5b73d8;
}
.c-label.yellow {
  background: #e0d35c;
}
.c-num {
  width: 59px;
  margin-left: 18px;
  color: #a8a8a8;
  font-size: 21px;
  flex: none;
}
.c-star {
  width: 24px;
  height: 24px;
  color: #a8a8a8;
}
.c-layer {
  margin-left: 13px;
  color: #a8a8a8;
  font-size: 21.700px;
  font-weight: 500;
}
.c-hash {
  display: flex;
  align-items: center;
  justify-content: center;
  width: 28px;
  height: 28px;
  margin-left: 7px;
  background: #333;
}
.c-input {
  display: flex;
  align-items: center;
  width: 364px;
  height: 30px;
  margin-left: 4px;
  padding-left: 4px;
  border: 3px solid #a8a8a8;
  color: #b0b0b0;
  font-size: 22px;
  font-weight: 500;
}
.switches {
  display: flex;
  align-items: center;
  width: 274px;
  padding-left: 6px;
  gap: 4px;
}
.sw {
  display: flex;
  align-items: center;
  justify-content: center;
  width: 26px;
  height: 26px;
  background: var(--dark);
  color: #b5b5b5;
}
.sw.dim {
  color: #6a6a6a;
}
.sw.gap {
  margin-left: 30px;
}
.pick {
  width: 44px;
  padding-left: 7px;
  margin-top: -4px;
  color: #aaa;
}
.select-parent {
  width: 178px;
  height: 28px;
  padding: 0 12px 0 13px;
  flex: none;
}
.gutter {
  display: block;
  width: 170px;
  flex: none;
}
.tree {
  display: flex;
  align-items: center;
  flex: 1;
  height: 100%;
  padding-top: 3px;
  line-height: 26px;
}
.tree svg {
  margin-top: -3px;
}
.tree .chev-r {
  margin-right: 22px;
}
.tree .chev-d {
  margin: -3px 16px 0 2px;
}
.lv1 {
  padding-left: 8px;
}
.lv2 {
  padding-left: 42px;
  font-size: 20.800px;
}
.lv3 {
  padding-left: 77px;
  font-size: 20.800px;
}
.lv4 {
  padding-left: 103px;
}
.lv4 .watch {
  margin-right: 13px;
}
.name-sel {
  display: flex;
  align-items: center;
  flex: 1;
  height: 32px;
  margin-top: -3px;
  margin-right: 2px;
  padding: 3px 0 0 3px;
  background: #444;
  color: #9e9e9e;
}
.name-sel.spline {
  padding-left: 6px;
}
.graph-ic {
  margin-right: 10px;
}
.val {
  margin-left: 7px;
  width: 300px;
  padding-top: 1px;
}
.pick-prop {
  color: #aaa;
  margin-top: -4px;
}
.add {
  display: flex;
  align-items: center;
  gap: 8px;
  margin-left: 187px;
  color: #8a8a8a;
}
.add-txt {
  padding-top: 3px;
}
.add svg {
  margin-top: -4px;
}
.plus-minus {
  margin-left: 10px;
}
.kf-nav {
  display: flex;
  align-items: center;
  padding-left: 12px;
}
.kf-box {
  display: flex;
  align-items: center;
  justify-content: center;
  width: 26px;
  height: 28px;
  margin: 0 11px 0 12px;
  background: var(--dark);
}
.scroll {
  flex: 1;
  background: var(--dark);
  margin-left: -4px;
  padding: 2px 0 0 2px;
}
.scroll-thumb {
  width: 30px;
  height: 288px;
  background: #2c2c2c;
  border-radius: 15px;
}

/* graph side */
.tl-right {
  position: relative;
  flex: 1;
  overflow: hidden;
}
.nav-bar {
  height: 20px;
  margin: 10px 0 0 4px;
  background: #5c5c5c;
  border-top: 2px solid #0c0c0c;
  border-bottom: 2px solid #0c0c0c;
  border-radius: 8px 0 0 8px;
}
.nav-handle {
  display: block;
  width: 12px;
  height: 16px;
  background: #2f80e0;
  border-radius: 8px 0 0 8px;
}
.ruler {
  display: flex;
  height: 38px;
  margin-left: -34px;
  overflow: hidden;
  font-size: 19.500px;
  color: #8e8e8e;
}
.tick {
  position: relative;
  flex: 0 0 104.500px;
  padding-top: 5px;
  text-align: center;
  height: 38px;
}
.tick:first-child {
  padding-left: 8px;
}
.tick::after {
  content: "";
  position: absolute;
  left: 52px;
  bottom: 0;
  width: 2px;
  height: 10px;
  background: #777;
}
.tick.major::after {
  height: 15px;
}
.work {
  height: 34px;
  margin-left: 4px;
  background: #555;
  border-top: 2px solid #0c0c0c;
  border-bottom: 2px solid #0c0c0c;
}
.work-handle {
  display: block;
  width: 12px;
  height: 30px;
  margin-left: 1px;
  background: #2f80e0;
  border-radius: 7px 0 0 7px;
}
.green {
  height: 6px;
  margin-left: 19px;
  background: #3fae3a;
}
.graph-txt {
  font-family: "Noto Sans", sans-serif;
  font-size: 21px;
  fill: #8e8e8e;
}
.expr {
  display: flex;
  height: 59px;
  margin: 8px 0 0 13px;
}
.expr-num {
  width: 69px;
  padding: 6px 0 0 18px;
  background: #1e1e1e;
  color: #555;
  font-size: 21px;
}
.expr-dots {
  display: flex;
  flex-direction: column;
  justify-content: space-between;
  width: 28px;
  padding: 12px 0 0 10px;
  background: #232323;
}
.expr-dots i {
  width: 2px;
  height: 2px;
  background: #ddd;
}
.expr-code {
  flex: 1;
  padding: 6px 0 0 3px;
  background: #1b1b1b;
  font-family: "DejaVu Sans Mono", monospace;
  font-size: 23.400px;
  color: #bdbdbd;
  white-space: nowrap;
  overflow: hidden;
}
.expr-code b {
  font-weight: normal;
  color: #a8893f;
}
/* sits over ruler, bars and graph */
.playhead {
  position: absolute;
  left: 7px;
  top: 40px;
}
```
